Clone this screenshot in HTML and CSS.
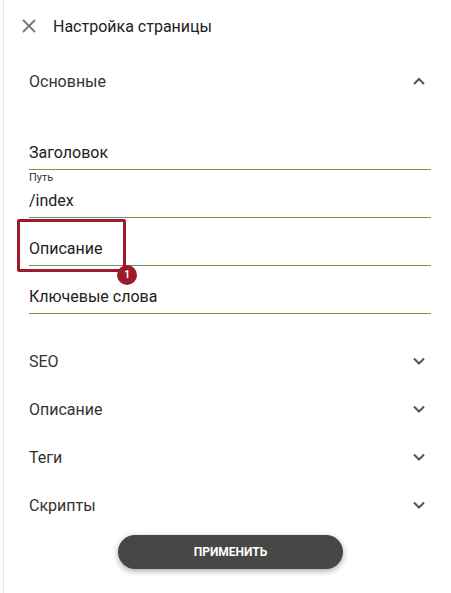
FILE: index.html
```html
<!DOCTYPE html>
<html lang="ru">
<head>
<meta charset="utf-8">
<title>Настройка страницы</title>
<link rel="stylesheet" href="styles.css">
</head>
<body>
<div class="panel">
  <header class="head">
    <svg class="close" width="14" height="14" viewBox="0 0 14 14"><path d="M1 1 L13 13 M13 1 L1 13" /></svg>
    <span class="title">Настройка страницы</span>
  </header>

  <section class="group">
    <div class="group-row">
      <span class="group-name">Основные</span>
      <svg class="chev" width="12" height="8" viewBox="0 0 12 8"><path d="M1 7 L6 2 L11 7" /></svg>
    </div>
    <div class="fields">
      <div class="field"><span class="value">Заголовок</span></div>
      <div class="field field-labeled">
        <span class="label">Путь</span>
        <span class="value">/index</span>
      </div>
      <div class="field">
        <span class="value">Описание</span>
        <span class="mark"></span>
        <span class="badge">1</span>
      </div>
      <div class="field"><span class="value">Ключевые слова</span></div>
    </div>
  </section>

  <div class="group-row">
    <span class="group-name">SEO</span>
    <svg class="chev" width="12" height="8" viewBox="0 0 12 8"><path d="M1 1.5 L6 6.5 L11 1.5" /></svg>
  </div>
  <div class="group-row">
    <span class="group-name">Описание</span>
    <svg class="chev" width="12" height="8" viewBox="0 0 12 8"><path d="M1 1.5 L6 6.5 L11 1.5" /></svg>
  </div>
  <div class="group-row">
    <span class="group-name">Теги</span>
    <svg class="chev" width="12" height="8" viewBox="0 0 12 8"><path d="M1 1.5 L6 6.5 L11 1.5" /></svg>
  </div>
  <div class="group-row">
    <span class="group-name">Скрипты</span>
    <svg class="chev" width="12" height="8" viewBox="0 0 12 8"><path d="M1 1.5 L6 6.5 L11 1.5" /></svg>
  </div>

  <div class="actions">
    <button class="apply">ПРИМЕНИТЬ</button>
  </div>
</div>
</body>
</html>
```

FILE: styles.css
```css
* { box-sizing: border-box; }

html, body {
  margin: 0;
  padding: 0;
  background: #fff;
}

body {
  font-family: Roboto, "Liberation Sans", Arial, sans-serif;
  color: #222;
}

.panel {
  margin-left: 3px;
  border-left: 1px solid #e6e6e6;
  min-height: 593px;
}

.head {
  height: 52px;
  display: flex;
  align-items: center;
  padding-left: 18px;
  gap: 17px;
}

.close path {
  stroke: #777;
  stroke-width: 1.8;
  fill: none;
}

.title {
  font-size: 16px;
  color: #222;
}

.group-row {
  height: 48px;
  display: flex;
  align-items: center;
  justify-content: space-between;
  padding: 0 26px 0 25px;
}

.group > .group-row {
  margin-top: 5px;
}

.group-name {
  font-size: 16px;
  color: #333;
}

.chev path {
  stroke: #555;
  stroke-width: 2;
  fill: none;
}

.fields {
  margin: 0 20px 0 25px;
  padding: 17px 0 23px;
}

.field {
  position: relative;
  height: 48px;
  border-bottom: 1px solid #6f9a55;
  display: flex;
  flex-direction: column;
  justify-content: flex-end;
  padding-bottom: 7px;
}

.field-labeled {
  justify-content: space-between;
  padding-top: 1px;
}

.label {
  font-size: 11px;
  line-height: 13px;
  color: #333;
}

.value {
  font-size: 16px;
  line-height: 18px;
  color: #212121;
}

.mark {
  position: absolute;
  left: -12px;
  top: 1px;
  width: 109px;
  height: 53px;
  border: 3px solid #9c1a2e;
  border-radius: 2px;
}

.badge {
  position: absolute;
  left: 88px;
  top: 47px;
  width: 20px;
  height: 20px;
  border-radius: 50%;
  background: #9c1a2e;
  color: #fff;
  font-size: 10px;
  font-weight: 700;
  line-height: 20px;
  text-align: center;
}

.actions {
  display: flex;
  justify-content: center;
  padding-left: 6px;
  margin-top: 6px;
}

.apply {
  width: 225px;
  height: 34px;
  border: none;
  border-radius: 17px;
  background: #474747;
  color: #fff;
  font-family: Roboto, "Liberation Sans", Arial, sans-serif;
  font-size: 12px;
  font-weight: 700;
  box-shadow: 0 2px 6px rgba(0, 0, 0, 0.35);
}
```
